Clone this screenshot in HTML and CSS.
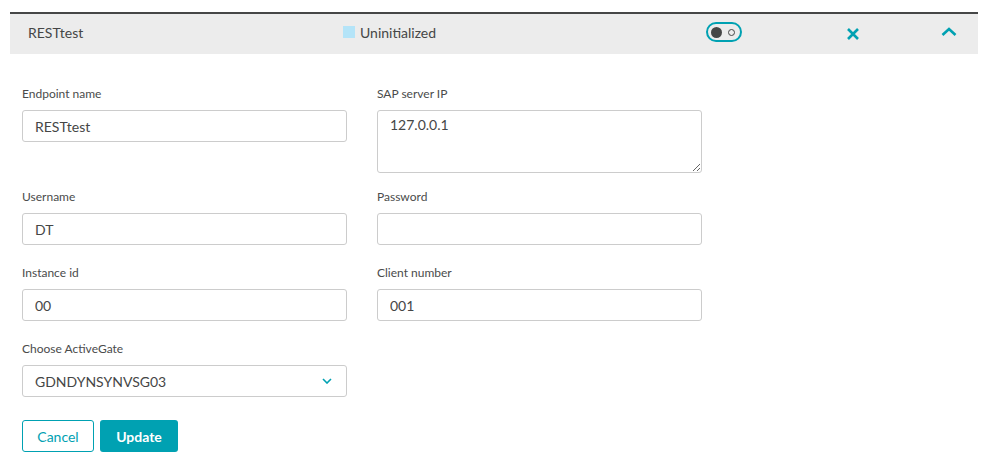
FILE: index.html
```html
<!DOCTYPE html>
<html>
<head>
<meta charset="utf-8">
<link rel="stylesheet" href="styles.css">
</head>
<body>
<div class="panel">
  <div class="header">
    <div class="h-name">RESTtest</div>
    <div class="h-status"><span class="sq"></span>Uninitialized</div>
    <div class="h-toggle"><span class="toggle"><span class="knob"></span><span class="ring"></span></span></div>
    <div class="h-close">
      <svg width="14" height="14" viewBox="0 0 14 14"><path d="M2 2 L12 12 M12 2 L2 12" stroke="#00a1b2" stroke-width="2.6" fill="none"/></svg>
    </div>
    <div class="h-collapse">
      <svg width="16" height="10" viewBox="0 0 16 10"><path d="M1.5 8 L8 2 L14.5 8" stroke="#00a1b2" stroke-width="2.6" fill="none"/></svg>
    </div>
  </div>
  <form class="form">
    <div class="grid">
      <div class="field"><label>Endpoint name</label><input class="inp" type="text" value="RESTtest"></div>
      <div class="field tall"><label>SAP server IP</label><textarea class="inp ta">127.0.0.1</textarea></div>
      <div class="field"><label>Username</label><input class="inp" type="text" value="DT"></div>
      <div class="field"><label>Password</label><input class="inp" type="password" value=""></div>
      <div class="field"><label>Instance id</label><input class="inp" type="text" value="00"></div>
      <div class="field"><label>Client number</label><input class="inp" type="text" value="001"></div>
      <div class="field"><label>Choose ActiveGate</label>
        <div class="inp select"><span>GDNDYNSYNVSG03</span>
          <svg width="10" height="6" viewBox="0 0 10 6"><path d="M1 1 L5 5 L9 1" stroke="#00a1b2" stroke-width="1.6" fill="none"/></svg>
        </div>
      </div>
    </div>
    <div class="actions">
      <button type="button" class="btn cancel">Cancel</button>
      <button type="button" class="btn update">Update</button>
    </div>
  </form>
</div>
</body>
</html>
```
FILE: styles.css
```css
* { box-sizing: border-box; }
body {
  margin: 0;
  padding: 12px 15px 0 10px;
  font-family: Lato, "Open Sans", sans-serif;
  color: #454646;
  background: #fff;
}
.header {
  display: grid;
  grid-template-columns: 315px 363px 140px 95px auto;
  align-items: center;
  height: 42px;
  padding-left: 18px;
  padding-bottom: 3px;
  background: #ececec;
  border-top: 2px solid #454646;
  font-size: 14px;
}
.h-status { display: flex; align-items: center; }
.sq {
  width: 12px; height: 12px;
  background: #b4e4f8;
  margin-right: 5px;
  margin-top: -1px;
}
.h-toggle { display: flex; align-items: center; margin-top: -1px; }
.toggle {
  display: flex;
  align-items: center;
  justify-content: space-between;
  width: 36px; height: 20px;
  border: 2px solid #00a1b2;
  border-radius: 10px;
  padding: 0 5px 0 3px;
}
.knob { width: 11px; height: 11px; border-radius: 50%; background: #454646; }
.ring { width: 7px; height: 7px; border-radius: 50%; border: 1.3px solid #454646; }
.h-close, .h-collapse { display: flex; align-items: center; }
.h-close svg { margin-top: 3px; }
.h-collapse svg { margin-top: -1px; }
.form { padding: 32px 12px 0; }
.grid {
  display: grid;
  grid-template-columns: 325px 325px;
  column-gap: 30px;
  row-gap: 20px;
}
.field { display: flex; flex-direction: column; }
.field.tall { margin-bottom: -4px; }
label {
  font-size: 12px;
  line-height: 16px;
  margin-bottom: 8px;
  color: #4a4b4b;
}
.inp {
  height: 32px;
  width: 325px;
  border: 1px solid #cccccc;
  border-radius: 3px;
  padding: 0 12px;
  font-family: Lato, "Open Sans", sans-serif;
  font-size: 14px;
  color: #454646;
  background: #fff;
  outline: none;
}
.ta {
  height: 63px;
  padding: 6px 12px;
  resize: both;
  line-height: 16px;
}
.select {
  display: flex;
  align-items: center;
  justify-content: space-between;
  padding-right: 14px;
}
.actions { display: flex; gap: 6px; margin-top: 23px; }
.btn {
  height: 32px;
  border-radius: 3px;
  font-family: Lato, "Open Sans", sans-serif;
  font-size: 14px;
  cursor: pointer;
}
.cancel {
  width: 72px;
  border: 1px solid #00a1b2;
  background: #fff;
  color: #00a1b2;
}
.update {
  width: 78px;
  border: none;
  background: #00a1b2;
  color: #fff;
  font-weight: 700;
}
```
